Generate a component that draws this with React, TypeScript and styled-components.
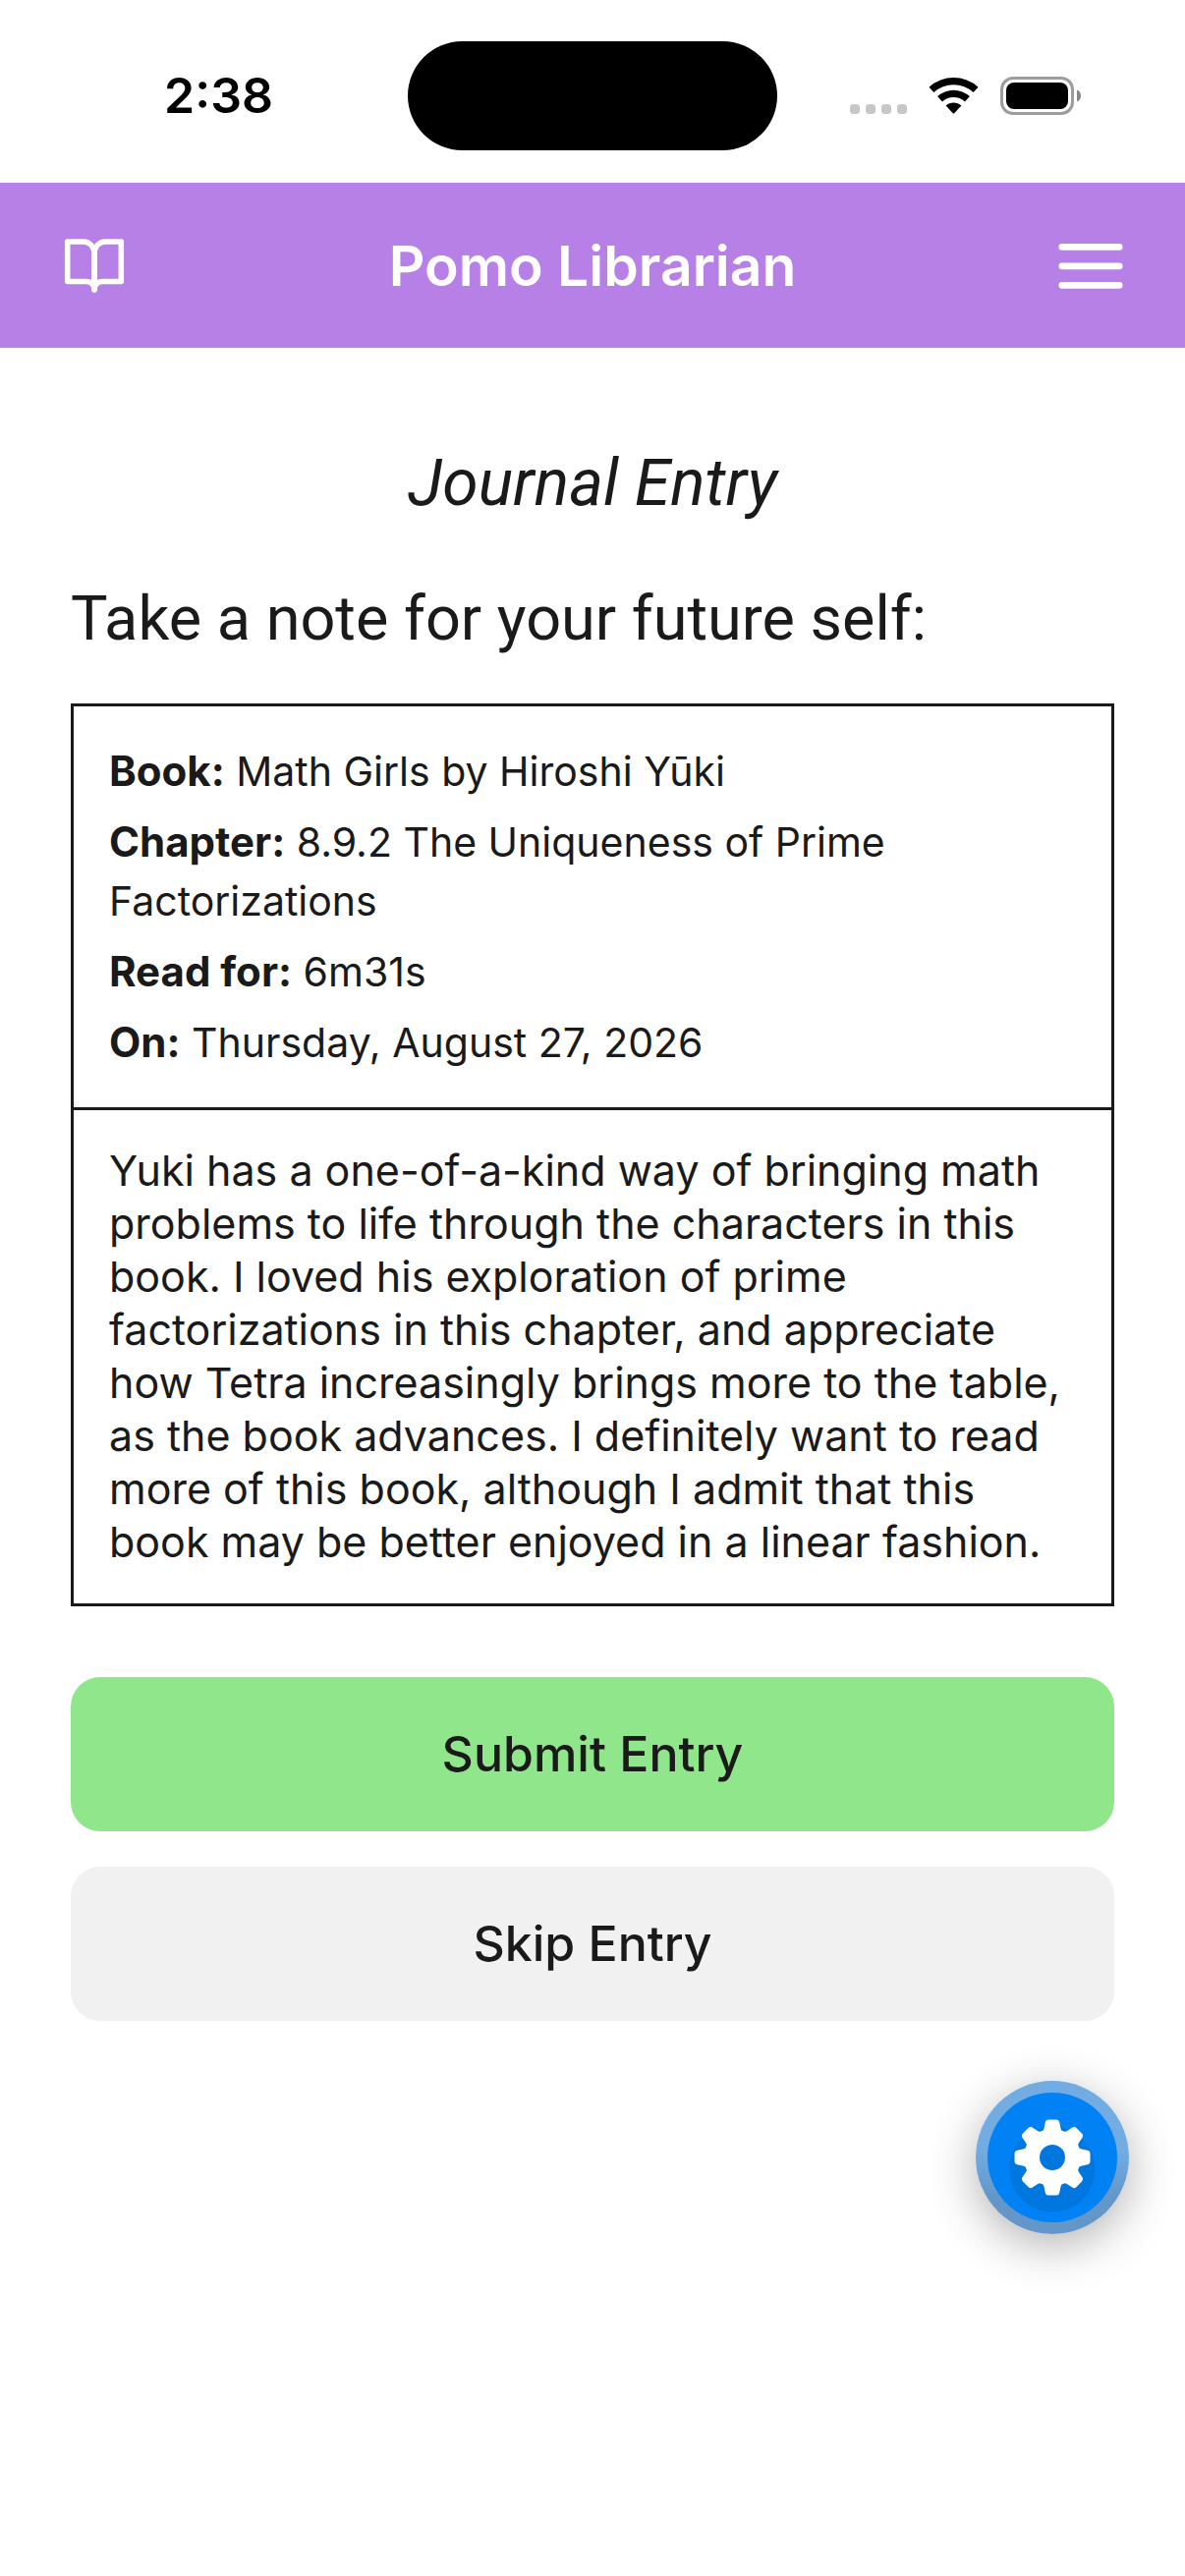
import React, { useState } from 'react';
import styled, { createGlobalStyle } from 'styled-components';

const ink = '#1a1a1a';
const gutter = '72px';

const GlobalStyle = createGlobalStyle`
  *, *::before, *::after { box-sizing: border-box; }
  body {
    margin: 0;
    background: #ffffff;
    color: ${ink};
    font-family: Inter, Roboto, 'Liberation Sans', sans-serif;
  }
  h1, h2, p, dl, dd { margin: 0; }
  button, textarea { font: inherit; color: inherit; }
`;

const StatusBar = styled.div`
  display: grid;
  grid-template-columns: 1fr 376px 1fr;
  align-items: center;
  justify-items: center;
  height: 186px;
  padding: 8px 30px 0;
  color: #000000;
`;

const Clock = styled.time`
  font-size: 50px;
  font-weight: 600;
  line-height: 60px;
`;

const Island = styled.div`
  width: 100%;
  height: 111px;
  border-radius: 56px;
  background: #000000;
`;

const StatusIcons = styled.div`
  display: flex;
  align-items: center;
  gap: 22px;
  padding-right: 2px;

  svg { display: block; }
`;

const AppBar = styled.header`
  display: flex;
  align-items: center;
  justify-content: space-between;
  height: 168px;
  padding: 2px 62px 0;
  background: #b780e7;
  color: #ffffff;
`;

const AppTitle = styled.h1`
  font-size: 57px;
  font-weight: 600;
  line-height: 72px;
`;

const IconButton = styled.button`
  display: flex;
  padding: 0;
  border: 0;
  background: none;
  cursor: pointer;
`;

const Form = styled.form`
  display: flex;
  flex-direction: column;
  padding: 98px ${gutter} 72px;
`;

const Heading = styled.h2`
  margin-bottom: 58px;
  font-family: Roboto, Inter, sans-serif;
  font-size: 66px;
  font-style: italic;
  font-weight: 400;
  line-height: 80px;
  text-align: center;
`;

const Prompt = styled.label`
  margin-bottom: 46px;
  font-family: Roboto, Inter, sans-serif;
  font-size: 63px;
  line-height: 80px;
`;

const EntryCard = styled.section`
  border: 3px solid ${ink};
`;

const Details = styled.dl`
  display: flex;
  flex-direction: column;
  gap: 12px;
  padding: 36px;
  border-bottom: 3px solid ${ink};
  font-size: 41px;
  line-height: 60px;
`;

const Detail = styled.div`
  dt, dd { display: inline; }
  dt { font-size: 42px; font-weight: 700; }
`;

const Note = styled.textarea`
  display: block;
  width: 100%;
  padding: 34px 36px 36px;
  border: 0;
  outline: 0;
  resize: none;
  overflow: hidden;
  background: none;
  field-sizing: content;
  font-size: 43px;
  line-height: 54px;
`;

const Actions = styled.div`
  display: flex;
  flex-direction: column;
  gap: 36px;
  margin-top: 72px;
`;

const ActionButton = styled.button<{ $tone: 'primary' | 'plain' }>`
  padding: 48px;
  border: 0;
  border-radius: 30px;
  background: ${({ $tone }) => ($tone === 'primary' ? '#90e68a' : '#f1f1f1')};
  font-size: 50px;
  font-weight: 500;
  line-height: 61px;
  cursor: pointer;
`;

const SettingsButton = styled.button`
  position: fixed;
  right: 57px;
  bottom: 348px;
  display: flex;
  padding: 12px;
  border: 0;
  border-radius: 50%;
  background: linear-gradient(#73ace3 45%, #6397c9 75%);
  box-shadow: 0 12px 48px rgba(0, 0, 0, 0.3);
  cursor: pointer;
`;

const SignalDots = () => (
  <svg width="58" height="39" viewBox="0 0 58 39" fill="#c6c8c7" aria-hidden="true">
    {[0, 16, 32, 48].map((x) => (
      <rect key={x} x={x} y="28" width="10" height="10" rx="3.5" />
    ))}
  </svg>
);

const Wifi = () => (
  <svg width="51" height="39" viewBox="-25.5 -38 51 39" aria-hidden="true">
    <path d="M-25-27.3A37.4 37.4 0 0 1 25-27.3L20.1-22A29.7 29.7 0 0 0-20.1-22Z" />
    <path d="M-16.4-17.9A24.3 24.3 0 0 1 16.4-17.9L11.5-12.6A17 17 0 0 0-11.5-12.6Z" />
    <path d="M-7.9-8.4A11.5 11.5 0 0 1 7.9-8.4L.7-.8Q0-.2-.7-.8Z" />
  </svg>
);

const Battery = () => (
  <svg width="82" height="39" viewBox="0 0 82 39" aria-hidden="true">
    <rect x="1.5" y="1.5" width="72" height="36" rx="11.5" fill="none" stroke="#9c9c9c" strokeWidth="3" />
    <rect x="6" y="6" width="63" height="27" rx="8" />
    <path d="M78 13.5C80.6 14.5 82 16.7 82 19.5S80.6 24.5 78 25.5Z" fill="#858585" />
  </svg>
);

const BookIcon = () => (
  <svg
    width="68"
    height="60"
    viewBox="-2 1 68 60"
    fill="none"
    stroke="currentColor"
    strokeWidth="5.5"
    strokeLinecap="round"
    strokeLinejoin="round"
    aria-hidden="true"
  >
    <path d="M32 55V18C32 11 27 6 21 6H4.7V46.5H23C28.5 46.5 32 49 32 55" />
    <path d="M32 55V18C32 11 37 6 43 6H59.3V46.5H41C35.5 46.5 32 49 32 55" />
  </svg>
);

const MenuIcon = () => (
  <svg width="68" height="48" viewBox="0 0 68 48" fill="currentColor" aria-hidden="true">
    {[1, 20.5, 40].map((y) => (
      <rect key={y} x="1.5" y={y} width="65" height="6.7" rx="3.3" />
    ))}
  </svg>
);

const GearIcon = () => (
  <svg width="132" height="132" viewBox="-66 -66 132 132" aria-hidden="true">
    <circle r="66" fill="#0082f4" />
    <circle cy="12" r="43.5" fill="#0077df" />
    <g fill="#ffffff">
      <circle r="28.8" />
      {[0, 45, 90, 135, 180, 225, 270, 315].map((angle) => (
        <path
          key={angle}
          transform={`rotate(${angle})`}
          d="M-12.5-26Q-9-26.5-8.4-30L-7.2-36Q-6.7-38.5-4.2-38.5H4.2Q6.7-38.5 7.2-36L8.4-30Q9-26.5 12.5-26L0-18Z"
        />
      ))}
    </g>
    <circle r="13" fill="#0077df" />
  </svg>
);

const details = [
  { term: 'Book:', value: 'Math Girls by Hiroshi Yūki' },
  { term: 'Chapter:', value: '8.9.2 The Uniqueness of Prime Factorizations' },
  { term: 'Read for:', value: '6m31s' },
  { term: 'On:', value: 'Thursday, August 27, 2026' },
];

const savedNote =
  'Yuki has a one-of-a-kind way of bringing math problems to life through the characters in this book. ' +
  'I loved his exploration of prime factorizations in this chapter, and appreciate how Tetra increasingly ' +
  'brings more to the table, as the book advances. I definitely want to read more of this book, although ' +
  'I admit that this book may be better enjoyed in a linear fashion.';

export default function App() {
  const [note, setNote] = useState(savedNote);

  return (
    <>
      <GlobalStyle />
      <StatusBar>
        <Clock>2:38</Clock>
        <Island />
        <StatusIcons>
          <SignalDots />
          <Wifi />
          <Battery />
        </StatusIcons>
      </StatusBar>

      <AppBar>
        <IconButton type="button" aria-label="Library">
          <BookIcon />
        </IconButton>
        <AppTitle>Pomo Librarian</AppTitle>
        <IconButton type="button" aria-label="Menu">
          <MenuIcon />
        </IconButton>
      </AppBar>

      <main>
        <Form onSubmit={(event) => event.preventDefault()}>
          <Heading>Journal Entry</Heading>
          <Prompt htmlFor="note">Take a note for your future self:</Prompt>
          <EntryCard>
            <Details>
              {details.map(({ term, value }) => (
                <Detail key={term}>
                  <dt>{term}</dt> <dd>{value}</dd>
                </Detail>
              ))}
            </Details>
            <Note
              id="note"
              spellCheck={false}
              value={note}
              onChange={(event) => setNote(event.target.value)}
            />
          </EntryCard>
          <Actions>
            <ActionButton type="submit" $tone="primary">
              Submit Entry
            </ActionButton>
            <ActionButton type="button" $tone="plain">
              Skip Entry
            </ActionButton>
          </Actions>
        </Form>
      </main>

      <SettingsButton type="button" aria-label="Settings">
        <GearIcon />
      </SettingsButton>
    </>
  );
}
